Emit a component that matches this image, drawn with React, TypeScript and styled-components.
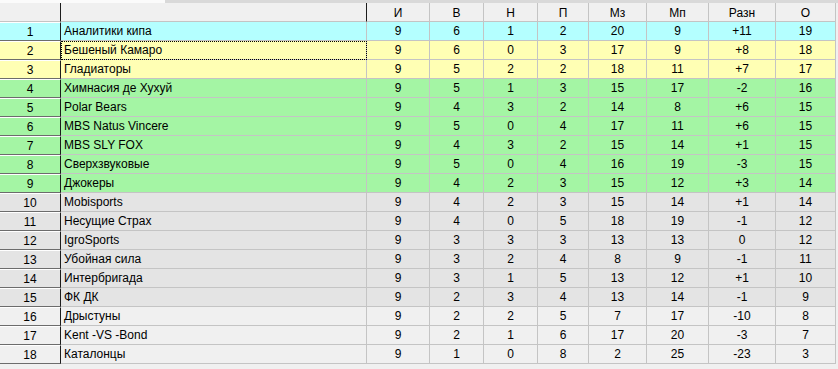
import React from "react";
import styled, { createGlobalStyle } from "styled-components";

type Tone = "cyan" | "yellow" | "green" | "gray" | "light";

const tones: Record<Tone, string> = {
  cyan: "#b4ffff",
  yellow: "#ffffb4",
  green: "#a4f5a4",
  gray: "#e4e4e4",
  light: "#f0f0f0",
};

interface Team {
  name: string;
  stats: (string | number)[];
}

const teams: Team[] = [
  { name: "Аналитики кипа", stats: [9, 6, 1, 2, 20, 9, "+11", 19] },
  { name: "Бешеный Камаро", stats: [9, 6, 0, 3, 17, 9, "+8", 18] },
  { name: "Гладиаторы", stats: [9, 5, 2, 2, 18, 11, "+7", 17] },
  { name: "Химнасия де Хухуй", stats: [9, 5, 1, 3, 15, 17, "-2", 16] },
  { name: "Polar Bears", stats: [9, 4, 3, 2, 14, 8, "+6", 15] },
  { name: "MBS Natus Vincere", stats: [9, 5, 0, 4, 17, 11, "+6", 15] },
  { name: "MBS SLY FOX", stats: [9, 4, 3, 2, 15, 14, "+1", 15] },
  { name: "Сверхзвуковые", stats: [9, 5, 0, 4, 16, 19, "-3", 15] },
  { name: "Джокеры", stats: [9, 4, 2, 3, 15, 12, "+3", 14] },
  { name: "Mobisports", stats: [9, 4, 2, 3, 15, 14, "+1", 14] },
  { name: "Несущие Страх", stats: [9, 4, 0, 5, 18, 19, "-1", 12] },
  { name: "IgroSports", stats: [9, 3, 3, 3, 13, 13, "0", 12] },
  { name: "Убойная сила", stats: [9, 3, 2, 4, 8, 9, "-1", 11] },
  { name: "Интербригада", stats: [9, 3, 1, 5, 13, 12, "+1", 10] },
  { name: "ФК ДК", stats: [9, 2, 3, 4, 13, 14, "-1", 9] },
  { name: "Дрыстуны", stats: [9, 2, 2, 5, 7, 17, "-10", 8] },
  { name: "Kent -VS -Bond", stats: [9, 2, 1, 6, 17, 20, "-3", 7] },
  { name: "Каталонцы", stats: [9, 1, 0, 8, 2, 25, "-23", 3] },
];

const headers = ["И", "В", "Н", "П", "Мз", "Мп", "Разн", "О"];

const toneFor = (place: number): Tone => {
  if (place === 1) return "cyan";
  if (place <= 3) return "yellow";
  if (place <= 9) return "green";
  if (place <= 15) return "gray";
  return "light";
};

const GlobalStyle = createGlobalStyle`
  html, body {
    margin: 0;
    padding: 0;
    background: #f0f0f0;
    font-family: "Liberation Sans", Arial, sans-serif;
    font-size: 12px;
    color: #000;
  }
`;

const Page = styled.div`
  width: 838px;
  height: 369px;
  overflow: hidden;
  background: #f0f0f0;
`;

const TopStrip = styled.div`
  display: flex;
  height: 3px;
  background: #d9d9d9;
`;

const StripLight = styled.div`
  width: 165px;
  background: #fbfbfb;
`;

const Grid = styled.div`
  display: grid;
  grid-template-columns: 61px 306px 63px 54px 54px 51px 58px 62px 67px 60px;
  grid-auto-rows: 19px;
  grid-template-rows: 19px;
`;

const HeaderCell = styled.div<{ $dark?: boolean }>`
  display: flex;
  align-items: center;
  justify-content: center;
  padding-top: 1px;
  background: #f0f0f0;
  border-right: 1px solid ${(p) => (p.$dark ? "#1c1c1c" : "#c4c4c4")};
  border-bottom: 1px solid #c4c4c4;
  box-sizing: border-box;
`;

const NumCell = styled.div<{ $tone: Tone }>`
  display: flex;
  align-items: center;
  justify-content: center;
  background: ${(p) => tones[p.$tone]};
  border-top: 1px solid #ffffff;
  border-right: 1px solid #1c1c1c;
  border-bottom: 1px solid #6c6c6c;
  box-sizing: border-box;
`;

const NameCell = styled.div<{ $tone: Tone; $focused?: boolean }>`
  display: flex;
  align-items: center;
  padding-left: 3px;
  background: ${(p) => tones[p.$tone]};
  border-right: 1px solid #c4c4c4;
  border-bottom: 1px solid #c4c4c4;
  box-sizing: border-box;
  outline: ${(p) => (p.$focused ? "1px dotted #000" : "none")};
  outline-offset: -1px;
  white-space: nowrap;
`;

const ValueCell = styled.div<{ $tone: Tone }>`
  display: flex;
  align-items: center;
  justify-content: center;
  background: ${(p) => tones[p.$tone]};
  border-right: 1px solid #c4c4c4;
  border-bottom: 1px solid #c4c4c4;
  box-sizing: border-box;
`;

export default function App() {
  return (
    <Page>
      <GlobalStyle />
      <TopStrip>
        <StripLight />
      </TopStrip>
      <Grid>
        <HeaderCell $dark />
        <HeaderCell $dark />
        {headers.map((h) => (
          <HeaderCell key={h}>{h}</HeaderCell>
        ))}
        {teams.map((t, i) => {
          const place = i + 1;
          const tone = toneFor(place);
          return (
            <React.Fragment key={t.name}>
              <NumCell $tone={tone}>{place}</NumCell>
              <NameCell $tone={tone} $focused={place === 2}>
                {t.name}
              </NameCell>
              {t.stats.map((v, j) => (
                <ValueCell key={j} $tone={tone}>
                  {v}
                </ValueCell>
              ))}
            </React.Fragment>
          );
        })}
      </Grid>
    </Page>
  );
}
